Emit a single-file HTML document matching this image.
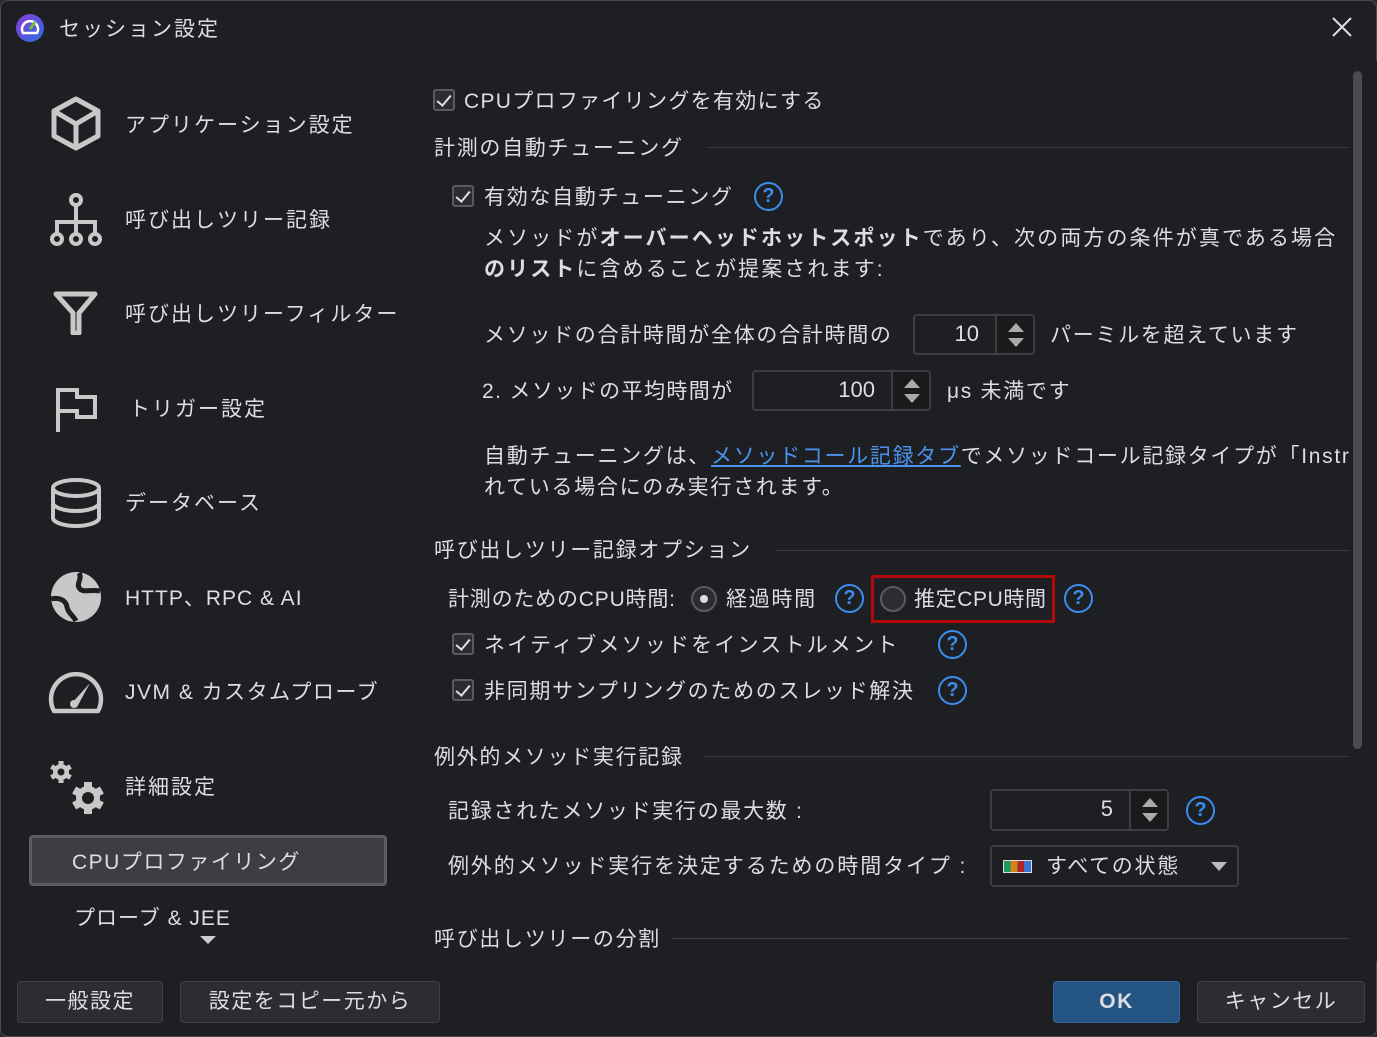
<!DOCTYPE html>
<html><head><meta charset="utf-8"><style>
*{margin:0;padding:0;box-sizing:border-box}
body{width:1377px;height:1037px;background:#2b2b2b;overflow:hidden;font-family:"Liberation Sans","Noto Sans CJK JP",sans-serif;color:#dcdee2}
.win{position:absolute;left:0;top:0;width:1377px;height:1037px;background:#1e1f22;border:1px solid #4a4b4e;border-radius:8px}
.a{position:absolute;white-space:nowrap}
.t{font-size:21px;letter-spacing:2px}
.s{font-size:21px;letter-spacing:1.7px}
.cb{position:absolute;width:22px;height:22px;border:2px solid #5a5b5e;border-radius:3px;background:#2b2d30}
.cb:after{content:"";position:absolute;left:5px;top:1px;width:6px;height:12px;border:solid #e0e0e0;border-width:0 2.5px 2.5px 0;transform:rotate(40deg)}
.q{position:absolute;width:29px;height:29px;border:2.5px solid #3a8eef;border-radius:50%;color:#3a8eef;font-size:20px;font-weight:bold;text-align:center;line-height:24px}
.hl{position:absolute;height:1px;background:#3d3e41}
.spin{position:absolute;border:2px solid #3d3e41;border-radius:4px;background:#1e1f22}
.spin .v{position:absolute;top:0;right:54px;line-height:36px;font-size:22px}
.spin .b{position:absolute;right:0;top:0;bottom:0;width:38px;border-left:2px solid #3d3e41;background:#191a1c}
.up{position:absolute;left:11px;top:7px;border:8px solid transparent;border-bottom:9px solid #aaa;border-top:0}
.dn{position:absolute;left:11px;top:22px;border:8px solid transparent;border-top:9px solid #aaa;border-bottom:0}
.btn{position:absolute;height:42px;border:1.5px solid #3f4043;border-radius:4px;background:#2b2d30;font-size:21px;text-align:center;line-height:40px;letter-spacing:1.5px}
svg{position:absolute}
</style></head><body><div class="win">
<svg style="left:15px;top:13px" width="28" height="28" viewBox="0 0 28 28"><defs><linearGradient id="g" x1="0" y1="0" x2="1" y2="1"><stop offset="0" stop-color="#8a3ad8"/><stop offset="1" stop-color="#2b6ee0"/></linearGradient></defs><circle cx="14" cy="14" r="14" fill="url(#g)"/><path d="M7 19 A8 8 0 1 1 21 19 Z" fill="none" stroke="#fff" stroke-width="2.5"/><path d="M14 15 L19 8" stroke="#6ec33a" stroke-width="3"/></svg>
<div class="a t" style="left:58px;top:12px">セッション設定</div>
<svg style="left:1330px;top:15px" width="22" height="22"><path d="M2 2L20 20M20 2L2 20" stroke="#ddd" stroke-width="2"/></svg>

<svg style="left:48px;top:95px" width="54" height="56" viewBox="0 0 54 56"><path d="M27 3L49 15V40L27 52L5 40V15Z M5 15L27 28L49 15 M27 28V52" fill="none" stroke="#c8c8c8" stroke-width="5" stroke-linejoin="round"/></svg>
<svg style="left:47px;top:191px" width="56" height="54" viewBox="0 0 56 54"><g fill="none" stroke="#c8c8c8" stroke-width="4"><circle cx="28" cy="8" r="5"/><path d="M28 13V30M9 43V30H47V43M28 30V43"/><circle cx="9" cy="47" r="5"/><circle cx="28" cy="47" r="5"/><circle cx="47" cy="47" r="5"/></g></svg>
<svg style="left:52px;top:290px" width="46" height="44" viewBox="0 0 46 44"><path d="M3 3H42L26 22V42H20V22Z" fill="none" stroke="#c8c8c8" stroke-width="5" stroke-linejoin="round"/></svg>
<svg style="left:54px;top:386px" width="44" height="48" viewBox="0 0 44 48"><path d="M3 45V3H22V10H40V30H22V24H3" fill="none" stroke="#c8c8c8" stroke-width="4"/></svg>
<svg style="left:49px;top:476px" width="52" height="52" viewBox="0 0 52 52"><g fill="none" stroke="#c8c8c8" stroke-width="4"><ellipse cx="26" cy="11" rx="23" ry="8"/><path d="M3 11V41C3 45 13 49 26 49S49 45 49 41V11M3 26C3 30 13 34 26 34S49 30 49 26"/></g></svg>
<svg style="left:48px;top:569px" width="54" height="54" viewBox="0 0 54 54"><circle cx="27" cy="27" r="25" fill="#c8c8c8"/><path d="M27 3C31 8 26 13 31 17C36 21 44 18 51 22L51 30C45 30 40 30 37 33C33 37 40 41 35 46L28 51C24 44 26 38 20 35C14 32 6 34 2 32L2 27C8 27 14 26 16 22C19 17 15 10 20 4Z" fill="#1e1f22" transform="scale(0)"/><path d="M30 3C34 9 26 14 31 19C35 23 42 19 51 21 M2 29C10 27 17 30 18 37C19 43 24 45 27 51" fill="none" stroke="#1e1f22" stroke-width="5"/></svg>
<svg style="left:47px;top:665px" width="56" height="48" viewBox="0 0 56 48"><path d="M6 45A25 25 0 1 1 50 45Z" fill="none" stroke="#c8c8c8" stroke-width="4.5" stroke-linejoin="round"/><path d="M24 37L42 17L29 41Z" fill="#c8c8c8"/><circle cx="26" cy="38" r="4" fill="#c8c8c8"/></svg>
<svg style="left:46px;top:757px" width="60" height="58" viewBox="0 0 60 58">
<g fill="#c8c8c8" transform="translate(14 14)"><circle r="8"/><rect x="-2.5" y="-11" width="5" height="22"/><rect x="-2.5" y="-11" width="5" height="22" transform="rotate(60)"/><rect x="-2.5" y="-11" width="5" height="22" transform="rotate(120)"/><circle r="3.5" fill="#1e1f22"/></g>
<g fill="#c8c8c8" transform="translate(41 40)"><circle r="12"/><rect x="-4" y="-16" width="8" height="32"/><rect x="-4" y="-16" width="8" height="32" transform="rotate(60)"/><rect x="-4" y="-16" width="8" height="32" transform="rotate(120)"/><circle r="6" fill="#1e1f22"/></g></svg>

<div class="a t" style="left:124px;top:108px">アプリケーション設定</div>
<div class="a t" style="left:124px;top:203px">呼び出しツリー記録</div>
<div class="a t" style="left:124px;top:297px">呼び出しツリーフィルター</div>
<div class="a t" style="left:128px;top:392px">トリガー設定</div>
<div class="a t" style="left:124px;top:486px">データベース</div>
<div class="a t" style="left:124px;top:581px;letter-spacing:1px">HTTP、RPC &amp; AI</div>
<div class="a t" style="left:124px;top:675px;letter-spacing:1.5px">JVM &amp; カスタムプローブ</div>
<div class="a t" style="left:124px;top:770px">詳細設定</div>
<div class="a" style="left:28px;top:834px;width:358px;height:51px;border:3px solid #5b5c5f;border-radius:4px;background:#3c3e41"></div>
<div class="a t" style="left:71px;top:845px;letter-spacing:1.5px">CPUプロファイリング</div>
<div class="a t" style="left:73px;top:901px;letter-spacing:1px">プローブ &amp; JEE</div>
<div class="a" style="left:199px;top:935px;border:8px solid transparent;border-top:8px solid #ccc;border-bottom:0"></div>

<div class="cb" style="left:432px;top:88px"></div>
<div class="a s" style="left:463px;top:84px;letter-spacing:1.3px">CPUプロファイリングを有効にする</div>
<div class="a s" style="left:433px;top:131px">計測の自動チューニング</div>
<div class="hl" style="left:706px;top:146px;width:642px"></div>
<div class="cb" style="left:451px;top:184px"></div>
<div class="a s" style="left:483px;top:180px">有効な自動チューニング</div>
<div class="q" style="left:753px;top:181px">?</div>
<div class="a s" style="left:483px;top:221px;letter-spacing:2.1px">メソッドが<b>オーバーヘッドホットスポット</b>であり、次の両方の条件が真である場合</div>
<div class="a s" style="left:483px;top:252px;letter-spacing:2.1px"><b>のリスト</b>に含めることが提案されます:</div>
<div class="a s" style="left:483px;top:318px">メソッドの合計時間が全体の合計時間の</div>
<div class="spin" style="left:912px;top:313px;width:122px;height:41px"><span class="v">10</span><div class="b"><i class="up"></i><i class="dn"></i></div></div>
<div class="a s" style="left:1049px;top:318px">パーミルを超えています</div>
<div class="a s" style="left:481px;top:374px;letter-spacing:1.4px">2. メソッドの平均時間が</div>
<div class="spin" style="left:751px;top:369px;width:179px;height:41px"><span class="v">100</span><div class="b"><i class="up"></i><i class="dn"></i></div></div>
<div class="a s" style="left:946px;top:374px">μs 未満です</div>
<div class="a s" style="left:483px;top:439px">自動チューニングは、<span style="color:#4a94f0;text-decoration:underline">メソッドコール記録タブ</span>でメソッドコール記録タイプが「Instr</div>
<div class="a s" style="left:483px;top:470px">れている場合にのみ実行されます。</div>
<div class="a" style="left:1348px;top:60px;width:29px;height:900px;background:#1e1f22"></div>
<div class="a" style="left:1352px;top:70px;width:9px;height:678px;border-radius:5px;background:#4a4b4e"></div>

<div class="a s" style="left:433px;top:533px">呼び出しツリー記録オプション</div>
<div class="hl" style="left:775px;top:549px;width:573px"></div>
<div class="a s" style="left:447px;top:582px;letter-spacing:0.8px">計測のためのCPU時間:</div>
<div class="a" style="left:690px;top:585px;width:26px;height:26px;border:2px solid #5a5b5e;border-radius:50%;background:#2b2d30"><div style="position:absolute;left:7px;top:7px;width:8px;height:8px;border-radius:50%;background:#ddd"></div></div>
<div class="a s" style="left:725px;top:582px">経過時間</div>
<div class="q" style="left:834px;top:583px">?</div>
<div class="a" style="left:870px;top:574px;width:184px;height:48px;border:3px solid #b10b0b"></div>
<div class="a" style="left:879px;top:585px;width:26px;height:26px;border:2px solid #5a5b5e;border-radius:50%;background:#2b2d30"></div>
<div class="a s" style="left:913px;top:582px;letter-spacing:0.6px">推定CPU時間</div>
<div class="q" style="left:1063px;top:583px">?</div>
<div class="cb" style="left:451px;top:632px"></div>
<div class="a s" style="left:483px;top:628px;letter-spacing:2.2px">ネイティブメソッドをインストルメント</div>
<div class="q" style="left:937px;top:629px">?</div>
<div class="cb" style="left:451px;top:678px"></div>
<div class="a s" style="left:483px;top:674px">非同期サンプリングのためのスレッド解決</div>
<div class="q" style="left:937px;top:675px">?</div>

<div class="a s" style="left:433px;top:740px">例外的メソッド実行記録</div>
<div class="hl" style="left:704px;top:755px;width:644px"></div>
<div class="a s" style="left:447px;top:794px">記録されたメソッド実行の最大数 :</div>
<div class="spin" style="left:989px;top:788px;width:179px;height:42px"><span class="v">5</span><div class="b"><i class="up"></i><i class="dn"></i></div></div>
<div class="q" style="left:1185px;top:795px">?</div>
<div class="a s" style="left:447px;top:849px;letter-spacing:1.9px">例外的メソッド実行を決定するための時間タイプ :</div>
<div class="a" style="left:989px;top:844px;width:249px;height:42px;border:2px solid #3d3e41;border-radius:4px"></div>
<div class="a" style="left:1002px;top:859px;width:29px;height:13px;border:1px solid #ddd;background:linear-gradient(90deg,#1c9a5c 25%,#d0851a 25% 50%,#b52424 50% 75%,#3b74d6 75%)"></div>
<div class="a s" style="left:1045px;top:849px">すべての状態</div>
<div class="a" style="left:1210px;top:861px;border:8px solid transparent;border-top:9px solid #bbb;border-bottom:0"></div>

<div class="a s" style="left:433px;top:922px">呼び出しツリーの分割</div>
<div class="hl" style="left:671px;top:937px;width:677px"></div>

<div class="btn" style="left:16px;top:980px;width:146px">一般設定</div>
<div class="btn" style="left:179px;top:980px;width:260px">設定をコピー元から</div>
<div class="btn" style="left:1052px;top:980px;width:127px;background:#245483;border-color:#34689b;font-weight:bold;font-family:'Liberation Sans',sans-serif">OK</div>
<div class="btn" style="left:1196px;top:980px;width:168px">キャンセル</div>
</div></body></html>
